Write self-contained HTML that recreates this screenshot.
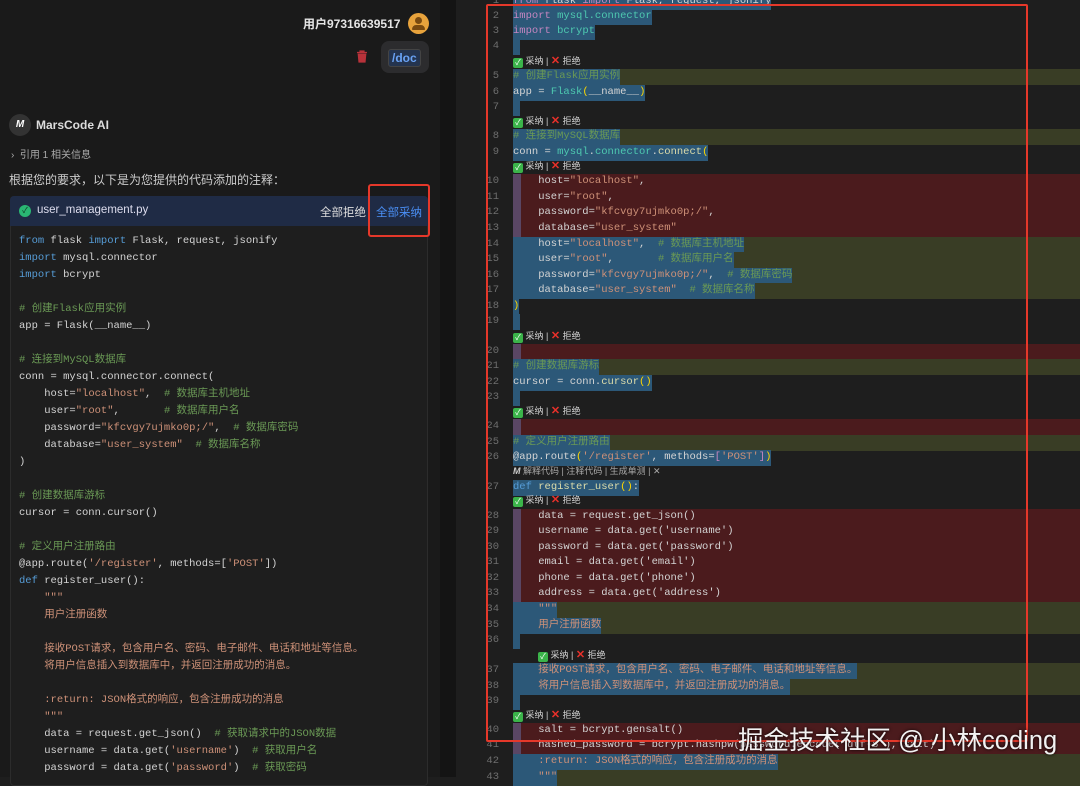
<!DOCTYPE html>
<html><head><meta charset="utf-8"><style>
*{margin:0;padding:0;box-sizing:border-box}
body{width:1080px;height:777px;overflow:hidden;background:#1e1e1e;position:relative;font-family:"Liberation Sans","Noto Sans CJK SC",sans-serif;color:#d4d4d4}
.mono{font-family:"Liberation Mono","Noto Sans CJK SC",monospace;font-size:10.5px}
#left{position:absolute;left:0;top:0;width:440px;height:777px;background:#1a1a1a}
#strip{position:absolute;left:440px;top:0;width:16px;height:777px;background:#141414}
.abs{position:absolute;white-space:nowrap}
.k{color:#569cd6}.c{color:#6a9955}.s{color:#ce9178}.f{color:#dcdcaa}.m{color:#4ec9b0}.p{color:#c586c0}.y{color:#ffd700}
pre.lc{position:absolute;left:19px;top:233px;line-height:17px;color:#d4d4d4}
.r{position:absolute;left:456px;right:0;height:15.5px;line-height:15.5px}
.r .n{position:absolute;left:0;width:43px;text-align:right;color:#6e6e6e;font-family:"Liberation Mono",monospace;font-size:10.5px}
.r .t{position:absolute;left:57px;white-space:pre;color:#d4d4d4}
.red{background:linear-gradient(90deg,transparent 57px,#5a4664 57px,#5a4664 65px,#4b1b1d 65px)}
.ol{background:linear-gradient(90deg,transparent 57px,#393d25 57px)}
.hl{background:#2c5878}
.bl{background:linear-gradient(90deg,transparent 57px,#2c5878 57px,#2c5878 64px,transparent 64px)}
.acc{font-size:9px;color:#ccc;font-family:"Liberation Sans","Noto Sans CJK SC",sans-serif}
.g{display:inline-block;width:10px;height:10px;background:#3bb44a;border-radius:2px;color:#fff;font-size:8px;line-height:10px;text-align:center;vertical-align:-1px}
.x{color:#e8302a;font-weight:bold;font-size:11px}
</style></head><body>
<div id="left"></div><div id="strip"></div>

<div class="abs" style="left:303px;top:15px;font-size:12px;font-weight:bold;color:#e6e6e6">用户97316639517</div>
<div class="abs" style="left:408px;top:13px;width:21px;height:21px;border-radius:50%;background:#e8a33c"><div style="position:absolute;left:7px;top:4px;width:7px;height:7px;border-radius:50%;background:#7a4a10"></div><div style="position:absolute;left:4px;top:12px;width:13px;height:5px;border-radius:5px 5px 1px 1px;background:#7a4a10"></div></div>
<svg class="abs" style="left:356px;top:50px" width="12" height="13" viewBox="0 0 12 13"><path d="M1 2.5h10M4 2.5V1h4v1.5M2.2 3.5l.8 8.5h6l.8-8.5" fill="#b8323a" stroke="#b8323a" stroke-width="1.2"/></svg>
<div class="abs" style="left:381px;top:41px;width:48px;height:32px;background:#2c2c2e;border-radius:8px"></div>
<div class="abs" style="left:388px;top:49px;padding:1px 3px;border:1px solid #444;border-radius:3px;background:#24344f;color:#6aa3f5;font-size:12px;font-weight:bold">/doc</div>

<div class="abs" style="left:9px;top:114px;width:22px;height:22px;border-radius:50%;background:#333;color:#fff;font-size:10px;font-weight:bold;text-align:center;line-height:22px;font-style:italic">M</div>
<div class="abs" style="left:36px;top:118px;font-size:12px;font-weight:bold;color:#ddd">MarsCode AI</div>
<div class="abs" style="left:11px;top:146px;font-size:10px;color:#aaa">›&nbsp; 引用 1 相关信息</div>
<div class="abs" style="left:9px;top:171px;font-size:12px;color:#ccc">根据您的要求，以下是为您提供的代码添加的注释：</div>

<div class="abs" style="left:10px;top:196px;width:418px;height:590px;background:#1e1e1e;border:1px solid #2c2c2c;border-radius:4px"></div>
<div class="abs" style="left:10px;top:196px;width:418px;height:30px;background:#1f2b45;border-radius:4px 4px 0 0"></div>
<div class="abs" style="left:19px;top:205px;width:12px;height:12px;border-radius:50%;background:#2ab673;color:#10301f;font-size:8px;line-height:12px;text-align:center">✓</div>
<div class="abs" style="left:37px;top:204px;font-size:11.5px;color:#dde">user_management.py</div>
<div class="abs" style="left:320px;top:204px;font-size:11.5px;color:#ddd">全部拒绝</div>
<div class="abs" style="left:376px;top:204px;font-size:11.5px;color:#4a8ff5">全部采纳</div>
<div class="abs" style="left:368px;top:184px;width:62px;height:53px;border:2px solid #e5382a;border-radius:3px"></div>

<pre class="lc mono"><span class="k">from</span> flask <span class="k">import</span> Flask, request, jsonify
<span class="k">import</span> mysql.connector
<span class="k">import</span> bcrypt

<span class="c"># 创建Flask应用实例</span>
app = Flask(__name__)

<span class="c"># 连接到MySQL数据库</span>
conn = mysql.connector.connect(
    host=<span class="s">"localhost"</span>,  <span class="c"># 数据库主机地址</span>
    user=<span class="s">"root"</span>,       <span class="c"># 数据库用户名</span>
    password=<span class="s">"kfcvgy7ujmko0p;/"</span>,  <span class="c"># 数据库密码</span>
    database=<span class="s">"user_system"</span>  <span class="c"># 数据库名称</span>
)

<span class="c"># 创建数据库游标</span>
cursor = conn.cursor()

<span class="c"># 定义用户注册路由</span>
@app.route(<span class="s">'/register'</span>, methods=[<span class="s">'POST'</span>])
<span class="k">def</span> register_user():
    <span class="s">"""</span>
    <span class="s">用户注册函数</span>

    <span class="s">接收POST请求，包含用户名、密码、电子邮件、电话和地址等信息。</span>
    <span class="s">将用户信息插入到数据库中，并返回注册成功的消息。</span>

    <span class="s">:return: JSON格式的响应，包含注册成功的消息</span>
    <span class="s">"""</span>
    data = request.get_json()  <span class="c"># 获取请求中的JSON数据</span>
    username = data.get(<span class="s">'username'</span>)  <span class="c"># 获取用户名</span>
    password = data.get(<span class="s">'password'</span>)  <span class="c"># 获取密码</span></pre>

<!-- right editor -->
<div class="r mono" style="top:-6px"><span class="n">1</span><span class="t hl"><span class="p">from</span> flask <span class="p">import</span> Flask, request, jsonify</span></div>
<div class="r mono" style="top:9px"><span class="n">2</span><span class="t hl"><span class="p">import</span> <span class="m">mysql.connector</span></span></div>
<div class="r mono" style="top:24px"><span class="n">3</span><span class="t hl"><span class="p">import</span> <span class="m">bcrypt</span></span></div>
<div class="r mono bl" style="top:39px"><span class="n">4</span></div>
<div class="r mono" style="top:54px"><span class="t acc"><span class="g">✓</span> 采纳 | <span class="x">✕</span> 拒绝</span></div>
<div class="r mono ol" style="top:69px"><span class="n">5</span><span class="t hl"><span class="c"># 创建Flask应用实例</span></span></div>
<div class="r mono" style="top:85px"><span class="n">6</span><span class="t hl">app = <span class="m">Flask</span><span class="y">(</span>__name__<span class="y">)</span></span></div>
<div class="r mono bl" style="top:100px"><span class="n">7</span></div>
<div class="r mono" style="top:114px"><span class="t acc"><span class="g">✓</span> 采纳 | <span class="x">✕</span> 拒绝</span></div>
<div class="r mono ol" style="top:129px"><span class="n">8</span><span class="t hl"><span class="c"># 连接到MySQL数据库</span></span></div>
<div class="r mono" style="top:145px"><span class="n">9</span><span class="t hl">conn = <span class="m">mysql</span>.<span class="m">connector</span>.<span class="f">connect</span><span class="y">(</span></span></div>
<div class="r mono" style="top:159px"><span class="t acc"><span class="g">✓</span> 采纳 | <span class="x">✕</span> 拒绝</span></div>
<div class="r mono red" style="top:174px"><span class="n">10</span><span class="t">    host=<span class="s">"localhost"</span>,</span></div>
<div class="r mono red" style="top:190px"><span class="n">11</span><span class="t">    user=<span class="s">"root"</span>,</span></div>
<div class="r mono red" style="top:205px"><span class="n">12</span><span class="t">    password=<span class="s">"kfcvgy7ujmko0p;/"</span>,</span></div>
<div class="r mono red" style="top:221px"><span class="n">13</span><span class="t">    database=<span class="s">"user_system"</span></span></div>
<div class="r mono ol" style="top:237px"><span class="n">14</span><span class="t hl">    host=<span class="s">"localhost"</span>,  <span class="c"># 数据库主机地址</span></span></div>
<div class="r mono ol" style="top:252px"><span class="n">15</span><span class="t hl">    user=<span class="s">"root"</span>,       <span class="c"># 数据库用户名</span></span></div>
<div class="r mono ol" style="top:268px"><span class="n">16</span><span class="t hl">    password=<span class="s">"kfcvgy7ujmko0p;/"</span>,  <span class="c"># 数据库密码</span></span></div>
<div class="r mono ol" style="top:283px"><span class="n">17</span><span class="t hl">    database=<span class="s">"user_system"</span>  <span class="c"># 数据库名称</span></span></div>
<div class="r mono" style="top:299px"><span class="n">18</span><span class="t hl"><span class="y">)</span></span></div>
<div class="r mono bl" style="top:314px"><span class="n">19</span></div>
<div class="r mono" style="top:329px"><span class="t acc"><span class="g">✓</span> 采纳 | <span class="x">✕</span> 拒绝</span></div>
<div class="r mono red" style="top:344px"><span class="n">20</span></div>
<div class="r mono ol" style="top:359px"><span class="n">21</span><span class="t hl"><span class="c"># 创建数据库游标</span></span></div>
<div class="r mono" style="top:375px"><span class="n">22</span><span class="t hl">cursor = conn.<span class="f">cursor</span><span class="y">()</span></span></div>
<div class="r mono bl" style="top:390px"><span class="n">23</span></div>
<div class="r mono" style="top:404px"><span class="t acc"><span class="g">✓</span> 采纳 | <span class="x">✕</span> 拒绝</span></div>
<div class="r mono red" style="top:419px"><span class="n">24</span></div>
<div class="r mono ol" style="top:435px"><span class="n">25</span><span class="t hl"><span class="c"># 定义用户注册路由</span></span></div>
<div class="r mono" style="top:450px"><span class="n">26</span><span class="t hl">@app.route<span class="y">(</span><span class="s">'/register'</span>, methods=<span class="p">[</span><span class="s">'POST'</span><span class="p">]</span><span class="y">)</span></span></div>
<div class="r mono" style="top:464px"><span class="t acc" style="color:#aaa"><b style="color:#ccc;font-style:italic">M</b> 解释代码 | 注释代码 | 生成单测 | ✕</span></div>
<div class="r mono" style="top:480px"><span class="n">27</span><span class="t hl"><span class="k">def</span> <span class="f">register_user</span><span class="y">()</span>:</span></div>
<div class="r mono" style="top:493px"><span class="t acc"><span class="g">✓</span> 采纳 | <span class="x">✕</span> 拒绝</span></div>
<div class="r mono red" style="top:509px"><span class="n">28</span><span class="t">    data = request.get_json()</span></div>
<div class="r mono red" style="top:524px"><span class="n">29</span><span class="t">    username = data.get('username')</span></div>
<div class="r mono red" style="top:540px"><span class="n">30</span><span class="t">    password = data.get('password')</span></div>
<div class="r mono red" style="top:555px"><span class="n">31</span><span class="t">    email = data.get('email')</span></div>
<div class="r mono red" style="top:571px"><span class="n">32</span><span class="t">    phone = data.get('phone')</span></div>
<div class="r mono red" style="top:586px"><span class="n">33</span><span class="t">    address = data.get('address')</span></div>
<div class="r mono ol" style="top:602px"><span class="n">34</span><span class="t hl">    <span class="s">"""</span></span></div>
<div class="r mono ol" style="top:618px"><span class="n">35</span><span class="t hl">    <span class="s">用户注册函数</span></span></div>
<div class="r mono bl" style="top:633px"><span class="n">36</span></div>
<div class="r mono" style="top:648px"><span class="t acc" style="left:82px"><span class="g">✓</span> 采纳 | <span class="x">✕</span> 拒绝</span></div>
<div class="r mono ol" style="top:663px"><span class="n">37</span><span class="t hl">    <span class="s">接收POST请求，包含用户名、密码、电子邮件、电话和地址等信息。</span></span></div>
<div class="r mono ol" style="top:679px"><span class="n">38</span><span class="t hl">    <span class="s">将用户信息插入到数据库中，并返回注册成功的消息。</span></span></div>
<div class="r mono bl" style="top:694px"><span class="n">39</span></div>
<div class="r mono" style="top:708px"><span class="t acc"><span class="g">✓</span> 采纳 | <span class="x">✕</span> 拒绝</span></div>
<div class="r mono red" style="top:723px"><span class="n">40</span><span class="t">    salt = bcrypt.gensalt()</span></div>
<div class="r mono red" style="top:738px"><span class="n">41</span><span class="t">    hashed_password = bcrypt.hashpw(password.encode('utf-8'), salt)</span></div>
<div class="r mono ol" style="top:754px"><span class="n">42</span><span class="t hl">    <span class="s">:return: JSON格式的响应，包含注册成功的消息</span></span></div>
<div class="r mono ol" style="top:770px"><span class="n">43</span><span class="t hl">    <span class="s">"""</span></span></div>

<div class="abs" style="left:486px;top:4px;width:542px;height:738px;border:2px solid #e5382a;border-radius:2px"></div>
<div class="abs" style="left:738px;top:720px;font-size:25.5px;color:#f2f2f2;text-shadow:0 0 3px #000">掘金技术社区 @ 小林coding</div>
</body></html>
